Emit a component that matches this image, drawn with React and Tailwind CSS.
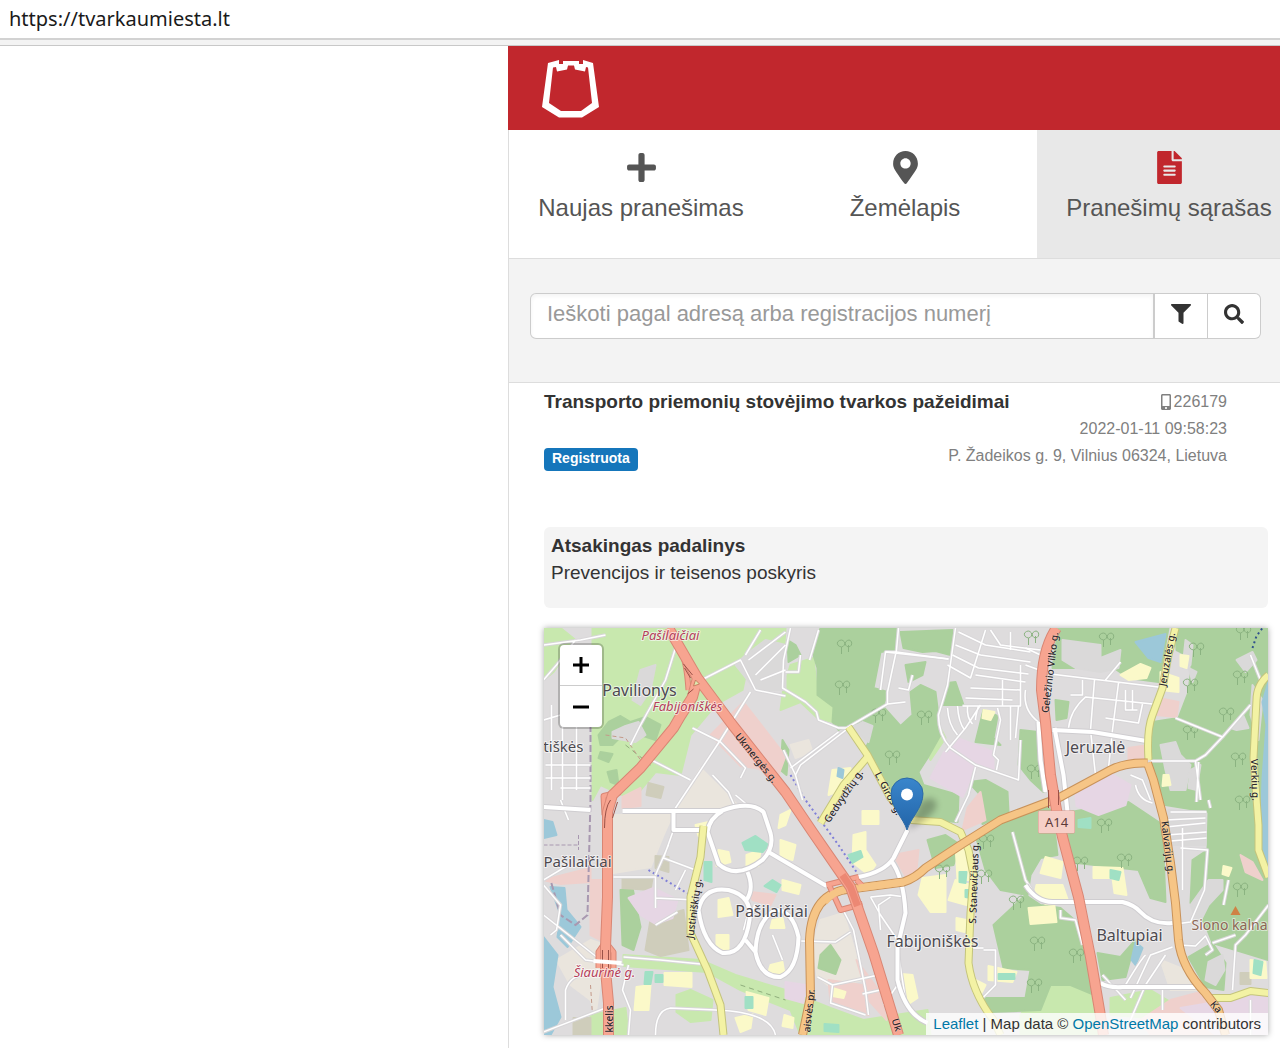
import { useState } from 'react';
import { FaPlus, FaMapMarkerAlt, FaFileAlt, FaFilter, FaSearch, FaMobileAlt } from 'react-icons/fa';

const TABS = [
  { id: 'new', label: 'Naujas pranešimas', Icon: FaPlus },
  { id: 'map', label: 'Žemėlapis', Icon: FaMapMarkerAlt },
  { id: 'list', label: 'Pranešimų sąrašas', Icon: FaFileAlt },
];

const GRASS = [
  '592,628 785,628 783,660 748,662 742,690 715,705 690,735 680,775 655,772 640,790 622,795 600,785 592,800',
  '783,688 790,665 813,658 817,695 833,707 832,722 817,718 800,702 780,710',
  '623,955 700,960 735,975 785,990 830,1008 863,1020 927,1010 930,1035 800,1035 790,1010 740,990 707,972 623,966',
  '590,1015 625,1008 628,1035 590,1035',
  '1040,985 1090,978 1102,1035 1020,1035 1020,1015',
  '543,628 560,628 575,640 553,672 543,680',
  '676,995 690,990 712,1000 710,1020 690,1022 676,1012',
  '1175,748 1202,744 1202,762 1178,760',
  '1245,840 1258,850 1266,880 1248,890',
  '1110,998 1150,990 1175,1005 1150,1018 1110,1015',
  '930,760 945,738 940,728 925,750',
];

const FOREST = [
  '820,628 898,628 896,650 880,652 873,688 887,692 883,705 847,725 838,730 832,722 833,707 817,695 817,668 813,655',
  '850,725 883,707 900,726 912,715 910,692 920,685 935,692 937,708 940,735 927,758 918,772 923,785 958,795 957,822 930,820 907,812 880,778 863,752 872,735 860,722',
  '900,632 952,630 950,655 935,651 922,652 903,648',
  '947,683 955,682 963,705 942,705',
  '983,710 997,716 993,738 1000,745 975,742',
  '968,782 985,780 1007,792 1008,812 982,824 980,795',
  '1175,628 1268,628 1268,960 1212,943 1205,925 1190,903 1192,860 1207,850 1208,812 1165,805 1150,758 1148,742 1152,722 1178,718 1188,692 1192,658 1176,650',
  '1058,628 1168,628 1158,682 1128,678 1102,660 1075,668 1052,668',
  '1020,730 1038,732 1043,792 1030,780 1018,765',
  '1070,812 1128,802 1158,822 1162,830 1165,902 1150,898 1138,870 1068,862 1058,830',
  '975,835 1000,822 1045,805 1052,812 1057,855 1040,858 1030,875 1027,895 1000,890 985,870',
  '993,925 1025,895 1040,905 1060,908 1080,925 1092,975 1094,995 1070,985 1050,985 1040,1010 990,1012 983,998 1025,998 1030,970 1003,968',
  '1097,953 1120,957 1135,940 1125,977 1102,980',
  '1188,957 1212,943 1225,963 1223,990 1205,987',
  '620,890 632,888 640,927 633,950 622,945',
  '608,722 620,716 630,722 645,717 660,725 655,740 640,735 625,732 612,745 600,745 598,735',
  '600,752 612,754 608,762 598,758',
  '607,772 616,770 618,785 610,782',
  '782,740 788,750 786,775 780,770',
  '927,840 945,835 960,845 953,865 935,868',
  '820,955 830,945 840,960 835,974 818,968',
  '1055,700 1068,702 1066,718 1056,720',
  '787,640 795,645 800,655 788,662',
  '905,665 925,662 922,675 908,682',
];

const RETAIL = [
  '710,735 743,702 785,756 778,775 755,768 740,766',
  '1128,748 1148,745 1146,762 1128,763',
  '1158,698 1178,702 1176,717 1156,715',
  '967,808 980,792 985,820 962,830',
  '622,797 640,788 640,806 622,808',
  '590,880 602,880 600,940 590,935',
  '828,980 862,985 868,1015 830,1003',
  '893,855 918,850 916,870 905,876',
  '543,880 590,868 590,882 560,884',
  '1170,1000 1200,992 1220,1035 1150,1035 1140,1020',
  '750,892 775,895 770,905 752,900',
  '1240,855 1252,862 1262,880 1245,872',
  '856,960 878,990 886,1020 868,1000',
];

const INDUSTRY = [
  '943,753 957,738 993,752 993,770 977,765 962,797 930,778',
  '1075,795 1108,772 1130,785 1125,805 1098,815 1076,806',
  '628,898 653,888 677,900 672,918 655,924 640,915',
  '1180,1008 1268,993 1268,1035 1215,1035',
  '785,982 805,985 803,1003 785,998',
];

const BEIGE = [
  '613,815 672,815 663,835 650,867 613,873',
  '700,768 737,805 720,810 672,812 690,785',
  '820,920 843,913 863,980 830,987 817,977 812,945',
  '590,940 605,945 595,1015 590,1000 570,985 556,960',
  '635,665 650,650 660,665 640,705 630,705',
  '1160,960 1185,970 1200,990 1170,990',
  '790,745 808,740 812,752 795,758',
];

const OLIVE = [
  '650,920 683,910 688,950 660,956 645,950',
  '622,878 652,878 650,890 622,888',
  '648,783 663,787 660,798 646,795',
  '655,856 668,857 668,872 655,868',
  '573,1018 590,1018 590,1035 573,1035',
  '1240,973 1250,973 1250,984 1240,984',
];

const WATER = [
  '543,820 552,822 556,835 543,838',
  '550,887 564,888 566,910 580,927 567,947 557,937 560,915',
  '543,937 557,955 552,987 560,1017 550,1035 543,1035',
  '1135,642 1150,638 1165,634 1160,662 1148,658',
  '1268,682 1262,702 1266,725 1262,778 1260,840 1268,870',
  '1135,942 1142,948 1135,965 1131,960',
  '838,768 843,770 842,778 837,776',
];

const SCHOOL = [
  '832,770 850,768 846,788 828,795', '862,811 878,811 878,824 862,824', '718,850 728,852 730,862 716,866',
  '746,855 760,850 758,866 746,868', '718,900 728,898 732,915 718,917', '716,935 728,935 728,950 716,948',
  '772,920 782,918 784,928 770,928', '770,965 782,962 784,974 768,972', '664,973 691,973 691,987 664,985',
  '636,987 650,985 648,1010 634,1010', '735,1018 752,1014 750,1028 740,1032', '746,992 768,998 765,1015 748,1010',
  '853,835 865,832 865,850 875,865 868,875 852,862', '782,880 800,885 798,894 782,890',
  '922,878 945,875 945,912 930,912 918,895', '955,845 966,845 968,880 957,880', '955,880 970,885 966,905 948,900',
  '956,918 966,920 964,932 956,930', '901,974 912,975 917,998 905,1006 900,990', '988,966 1016,972 1012,982 988,980',
  '1045,857 1062,862 1060,878 1040,873', '1036,885 1062,885 1068,902 1045,904 1034,895', '1028,908 1054,906 1056,922 1030,924',
  '1093,867 1122,868 1126,895 1114,893 1112,878 1093,878', '1120,675 1140,664 1150,668 1146,678 1128,680',
  '1160,672 1178,678 1178,692 1160,690', '1180,655 1188,656 1186,668 1180,666', '1163,775 1168,775 1170,785 1162,786',
  '1250,960 1265,962 1266,978 1250,978', '785,825 790,810 780,815 778,828', '780,840 795,845 792,860 780,856',
  '975,980 985,985 980,995 973,992', '784,1015 793,1018 792,1028 782,1026', '695,825 708,822 708,833 698,836',
  '832,988 845,992 843,998 832,996', '983,710 994,712 990,720 982,718', '1223,866 1231,868 1228,876 1222,874',
];

const PITCH = [
  '742,843 755,836 768,845 762,852 745,850', '772,880 780,885 776,892 764,886', '848,855 860,851 862,857 852,863',
  '959,872 966,872 965,883 959,882', '965,890 970,890 970,898 965,897', '745,997 752,997 752,1008 745,1008', '824,1024 838,1025 838,1032 824,1031',
  '1254,960 1262,962 1260,975 1253,973', '998,974 1014,974 1014,979 998,979', '1110,870 1120,872 1118,880 1110,878',
  '645,972 652,972 650,984 644,984', '655,975 662,975 662,982 655,982', '1078,820 1090,818 1090,828 1078,827', '704,862 711,862 711,882 704,880',
];

// clearings and yards inside the green areas
const YARDS = [
  '1062,640 1100,645 1100,658 1120,650 1118,668 1100,672 1075,668 1062,660',
  '1160,745 1175,742 1180,755 1190,765 1185,790 1170,790 1165,770',
  '1185,640 1192,645 1190,665 1182,668', '1188,668 1196,672 1192,682',
  '1236,660 1252,652 1256,660 1245,672', '1252,685 1262,700 1258,740 1250,715',
  '1208,880 1222,880 1222,890 1208,905 1198,925 1190,905', '1208,962 1222,955 1224,970 1215,985 1205,980',
  '735,665 745,655 765,640 785,645 785,690 755,690', '640,670 655,665 650,690 640,705 632,700',
  '612,732 625,726 638,722 645,735 635,742 612,738',
  '1168,810 1205,812 1205,845 1170,845', '868,742 872,726 862,722 852,728',
  '1230,728 1243,716 1248,728 1236,730', '1190,770 1200,765 1196,790 1188,788',
];

const THICK = [
  'M543 807L590 810M622 811L720 811Q750 800 763 812L770 833Q774 848 762 860Q736 880 718 864L707 832Q709 818 722 811',
  'M768 852L785 862L826 886', 'M747 872Q754 888 746 900', 'M698 910Q703 886 728 890Q752 896 749 920Q744 955 722 953Q703 945 698 910',
  'M745 940L755 952Q760 978 780 977Q797 970 798 937Q792 910 775 910Q756 920 755 952',
  'M858 877Q884 872 893 858L907 830M890 860Q903 876 905 913L897 947V980Q905 1014 927 1023',
  'M1083 902H1122Q1134 905 1140 912Q1152 925 1172 923', 'M1100 983Q1108 988 1122 987H1195',
  'M1025 885Q1036 902 1052 902H1075', 'M1052 730L1092 732L1146 741', 'M673 811V830H705', 'M1038 722L1040 760L1045 792', 'M1054 728L1063 775L1067 812',
];

const THIN = [
  'M543 645L580 640L605 635M543 680L556 665L575 640', 'M551 705V790M562 690V800M576 690V790M545 765H590M545 778H590M560 788H590M543 720L560 715L590 718M560 800L568 820',
  'M675 648L665 680L640 725L630 745', 'M693 684L740 660L755 690M745 655L760 630M755 675L785 645M760 680L785 670M748 660L785 632',
  'M755 690L785 696M750 692L720 740L673 811', 'M645 757L690 780M692 728L720 742L745 768L740 778', 'M712 775L728 792L735 808',
  'M790 628L783 660L782 688L805 702L816 712L818 720L838 728L846 728', 'M818 630L809 660M785 672H798L800 655',
  'M846 728L887 704V692L896 650L898 628M887 704L905 702M880 690L885 652L948 659',
  'M955 628L947 685L938 715Q938 735 950 748L975 765L1018 780L1020 740', 'M885 652H896L948 659M898 688L908 690L912 675',
  'M947 665L970 678L985 630M958 632L985 645M955 645L980 655M952 655L978 668M990 630L1000 645L1040 650M985 645L1030 652M980 655L1030 662M978 668L1028 674M975 675L1025 682M970 688L1020 690M965 698L1012 700M962 706H1020V665M1002 706V680M1010 632V650',
  'M947 708Q948 725 957 735M957 706Q958 722 964 730M967 706Q966 718 972 724M980 705L965 728L945 752M978 706Q975 716 975 720', 'M997 708L1000 720L993 755L998 760L996 770M1010 706V740M1018 706L1015 738',
  'M848 728L800 765L795 775M838 732L790 768', 'M783 750L795 775L802 800', 'M975 767L968 795L955 822',
  'M1025 648L1040 655M1025 665L1050 674L1158 687M1082 680V695H1070M1094 680L1090 730L1095 775M1118 683L1112 730L1108 768M1068 728Q1070 710 1085 697L1152 704M1125 690V710H1137M1132 690V710M1142 704L1138 723L1105 718M1105 680L1120 662M1025 690Q1022 710 1038 722',
  'M1150 761H1195L1205 755L1222 737L1175 718M1195 761L1200 800M1198 762L1196 802M1208 800L1210 808', 'M1130 775L1142 780L1150 800M1135 785Q1138 800 1152 803',
  'M1165 820L1205 818M1165 827L1205 823M1166 835L1206 832M1170 841L1206 838M1170 812L1206 812M1182 828V890M1180 848L1207 850L1204 890L1190 922L1175 924',
  'M1102 975L1125 1000M1145 955Q1140 960 1125 985M1172 947L1150 955L1130 998M1165 955L1145 985L1130 1020M1178 945L1195 946L1205 936L1212 950L1205 955M1268 905L1245 935L1235 945L1232 990M1212 943L1235 935M1250 1000V1035M1162 985V1010',
  'M1250 655L1260 680M1222 737L1250 705M1223 905L1228 880', 'M1060 910V918L1075 920L1082 945',
  'M590 810L543 808M543 880L568 865M543 885L560 905L556 930L550 935M560 935L585 960L623 965M543 915L600 960',
  'M623 957L660 960L700 964M655 1035Q655 1010 670 1008L715 1010Q770 1012 775 1035M628 965L622 990L630 1010L628 1035M543 1032L605 1008M565 1020V990Q570 975 585 975',
  'M673 830L663 858L695 870M613 877H655V908M655 898L695 900M655 925L677 912M685 870L675 890M668 845L655 875',
  'M870 897L890 895L905 897M870 897L880 915L897 940M890 897L878 905L880 930M840 905L853 930L865 990L868 1015M800 941L835 942L850 932M817 977L832 985L878 975M832 985L830 1003L865 1015M862 994L880 990',
  'M983 950H995V985L980 1000M970 948H983M1012 832L1025 880L1035 895', 'M897 948L905 1000M907 830L905 826', 'M747 805L735 795M772 935L782 960',
  'M749 907L743 930M754 905L748 930', 'M897 985L883 1005',
];

const TRUNK = [
  'M668 628L697 678L732 725L785 792L812 832L850 887L873 953L898 1035',
  'M697 678L692 697L680 716L673 728L640 768L612 795L607 812V897L605 947V970L608 1003V1035',
  'M1056 628Q1041 650 1041 690L1045 722L1050 775L1056 810L1062 837L1078 897L1090 957L1099 1010L1103 1035',
];
const TRUNK_LINKS = ['M680 650Q686 660 688 690', 'M826 885L858 877M829 886L840 910L862 904M856 880L862 886', 'M598 968V952L605 942L613 952V968', 'M604 815L603 796L620 792'];
const ORANGE = [
  'M802 1035L810 997L809 940Q811 892 850 889L903 882Q915 878 925 868L960 845L1000 820L1058 798L1110 770Q1125 762 1147 763',
  'M1147 763L1153 780L1163 818L1170 863L1175 903L1178 940Q1181 968 1205 993L1218 1010L1225 1035',
];
const YELLOW = [
  'M1175 628L1168 655L1162 688L1152 715Q1146 730 1148 760',
  'M1268 675Q1256 685 1256 700L1253 758L1258 825V850L1268 877',
  'M848 727L867 755L890 798L911 820L940 822L960 832L968 850L973 875L970 913L968 963Q972 993 993 1020L1000 1035',
  'M867 757L843 785L820 823',
  'M703 826L700 857L690 897V933L707 970L720 1005L723 1035',
  'M1208 998H1230L1250 991L1268 993',
];

const TREES = [
  [844, 647], [842, 688], [878, 716], [924, 718], [892, 758], [1031, 638], [1106, 640], [1196, 650], [1190, 686],
  [1226, 715], [1190, 733], [1240, 678], [1238, 760], [1242, 803], [1243, 633], [1104, 826], [1124, 861], [1080, 864],
  [1240, 890], [1037, 944], [1076, 956], [1034, 986], [1016, 903], [984, 877], [942, 872], [986, 842], [1034, 772],
];

const PLACES = [
  { text: 'Pavilionys', x: 639, y: 696 },
  { text: 'Jeruzalė', x: 1095, y: 753 },
  { text: 'Pašilaičiai', x: 771, y: 917 },
  { text: 'Fabijoniškės', x: 932, y: 947 },
  { text: 'Baltupiai', x: 1129, y: 941 },
];

const STREETS = [
  { text: 'Ukmergės g.', x: 753, y: 760, r: 51 },
  { text: 'Gedvydžių g.', x: 846, y: 798, r: -56 },
  { text: 'L. Giros g.', x: 885, y: 795, r: 62 },
  { text: 'Geležinio Vilko g.', x: 1053, y: 673, r: -83 },
  { text: 'Jeruzalės g.', x: 1170, y: 660, r: -80 },
  { text: 'Verkių g.', x: 1251, y: 780, r: 88 },
  { text: 'Kalvarijų g.', x: 1164, y: 848, r: 83 },
  { text: 'S. Stanevičiaus g.', x: 977, y: 883, r: -88 },
  { text: 'Justiniškių g.', x: 697, y: 909, r: -82 },
  { text: 'aisvės pr.', x: 812, y: 1011, r: -84 },
  { text: 'kkelis', x: 612, y: 1019, r: -90 },
  { text: 'Uk', x: 893, y: 1026, r: 72 },
  { text: 'Ka', x: 1213, y: 1009, r: 50 },
];

function Areas({ list, fill }) {
  return <g fill={fill} stroke={fill} strokeWidth="2" strokeLinejoin="round">{list.map((p) => <polygon key={p} points={p} />)}</g>;
}

function Roads({ list, color, casing, width }) {
  return (
    <g fill="none" strokeLinejoin="round">
      {list.map((d) => <path key={'c' + d} d={d} stroke={casing} strokeWidth={width + 2} />)}
      {list.map((d) => <path key={d} d={d} stroke={color} strokeWidth={width} />)}
    </g>
  );
}

function CityMap() {
  return (
    <svg viewBox="543 628 725 407" preserveAspectRatio="xMidYMid slice" className="block w-full h-[407px]" role="img" aria-label="Fabijoniškės">
      <rect x="543" y="628" width="725" height="407" fill="#dedcdd" />
      <Areas list={BEIGE} fill="#eae5dd" />
      <Areas list={GRASS} fill="#c8e8ae" />
      <Areas list={FOREST} fill="#abd09d" />
      <Areas list={YARDS} fill="#dad9d9" />
      <Areas list={OLIVE} fill="#cfcdbb" />
      <Areas list={RETAIL} fill="#efd0cc" />
      <Areas list={INDUSTRY} fill="#e6d6e4" />
      <Areas list={SCHOOL} fill="#fbf9c9" />
      <Areas list={WATER} fill="#9cc8d9" />
      <Areas list={PITCH} fill="#a0e0c4" />

      <g fill="none" stroke="#8bb381" strokeWidth="1">
        {TREES.map(([x, y]) => (
          <path key={x + '-' + y} d={`M${x - 3} ${y + 7}v-7m0 0q-5-1-4-5q4-4 7 0q1 4-3 5M${x + 4} ${y + 5}v-7m0 2q-4-1-3-5q4-4 6 0q1 4-3 5`} />
        ))}
      </g>

      <g fill="none" strokeWidth="1" stroke="#a898b0">
        <path d="M590 725V800L587 915L575 925L560 915L550 880" strokeWidth="2" strokeDasharray="7 3" />
        <path d="M543 845H578M578 835V850" strokeDasharray="4 2" />
        <path d="M648 870L688 894M790 775L805 800L838 845L856 872" stroke="#7f7fd8" strokeWidth="2" strokeDasharray="2 3" />
        <path d="M740 985L785 1000M625 745L650 765" stroke="#8fae7c" strokeDasharray="5 4" />
        <path d="M590 985L592 1015M605 735L625 738L640 760" stroke="#c49a8a" strokeDasharray="4 3" />
        <path d="M1252 648L1256 636L1262 628" stroke="#31508c" strokeWidth="2" strokeDasharray="2 3" />
      </g>

      <Roads list={THIN} color="#ffffff" casing="#d8d6d8" width={1.5} />
      <Roads list={THICK} color="#ffffff" casing="#cfcdd0" width={4} />
      <Roads list={YELLOW} color="#f3f2a4" casing="#c4c47c" width={6} />
      <Roads list={ORANGE} color="#f6c586" casing="#c8925a" width={7} />
      <Roads list={TRUNK_LINKS} color="#f7a490" casing="#d98674" width={4} />
      <Roads list={TRUNK} color="#f7a490" casing="#d98674" width={9} />
      <path d="M858 888L903 882M824 902Q832 892 843 890" fill="none" stroke="#f6c586" strokeWidth="7" />
      <path d="M842 875L850 887L857 906" fill="none" stroke="#ec8874" strokeWidth="7" />
      <path
        d="M683 664L692 675M684 668L690 678M687 694L693 689M604 828Q604 808 610 800M612 818L617 802M1048 790V808M1058 790V805M602 950V968M608 950V968"
        fill="none"
        stroke="#9b5248"
        strokeWidth="1"
      />
      <path d="M593 961L621 963" stroke="#ffffff" strokeWidth="4" />
      <path d="M693 686l2 -6l4 4z" fill="#dbe8b0" stroke="#c97f62" strokeWidth="1" />
      <path d="M1235 906L1240 915H1230Z" fill="#cf8245" />

      <g fontFamily="'Noto Sans', sans-serif" textAnchor="middle" paintOrder="stroke" strokeLinejoin="round">
        <g fill="#2c282c" fontSize="10" fontWeight="500" stroke="#ffffff" strokeOpacity="0.3" strokeWidth="1">
          {STREETS.map((s) => (
            <text key={s.text} x={s.x} y={s.y} transform={`rotate(${s.r} ${s.x} ${s.y})`}>{s.text}</text>
          ))}
        </g>
        <g fill="#4d4a50" fontSize="16" stroke="#ffffff" strokeOpacity="0.6" strokeWidth="2">
          {PLACES.map((p) => <text key={p.text} x={p.x} y={p.y}>{p.text}</text>)}
          <text x="543" y="867" fontSize="15" textAnchor="start">Pašilaičiai</text>
          <text x="583" y="752" fontSize="15" textAnchor="end">tiškės</text>
        </g>
        <g fill="#b5405a" fontSize="13" fontStyle="italic" stroke="#ffffff" strokeOpacity="0.6" strokeWidth="2">
          <text x="670" y="640">Pašilaičiai</text>
          <text x="687" y="711">Fabijoniškės</text>
          <text x="604" y="977">Šiaurinė g.</text>
        </g>
        <text x="1267" y="930" fontSize="14" textAnchor="end" fill="#8c6654" stroke="#ffffff" strokeOpacity="0.5" strokeWidth="2">Siono kalna</text>
        <rect x="1038" y="811" width="36" height="22" rx="1" fill="#f6cfc7" stroke="#d9958a" />
        <text x="1056" y="827" fontSize="13" fill="#5c3a38">A14</text>
      </g>

      <defs>
        <linearGradient id="pin" x1="0" y1="0" x2="0" y2="1">
          <stop offset="0" stopColor="#3a86cc" />
          <stop offset="1" stopColor="#2264a8" />
        </linearGradient>
        <filter id="soft" x="-50%" y="-50%" width="200%" height="200%">
          <feGaussianBlur stdDeviation="3" />
        </filter>
      </defs>
      <path d="M907 830L920 802Q932 794 936 803Q938 814 907 830Z" fill="#000000" opacity="0.25" filter="url(#soft)" />
      <path
        d="M906.500 830C903 818 890.500 808 890.500 793.500A16 15.500 0 0 1 922.500 793.500C922.500 808 910 818 906.500 830Z"
        fill="url(#pin)"
        stroke="#2c6aa6"
      />
      <circle cx="906.500" cy="794.500" r="6" fill="#ffffff" />
    </svg>
  );
}

function Logo() {
  return (
    <svg viewBox="0 0 57 59" className="w-[57px] h-[59px]" fill="#ffffff" role="img" aria-label="Tvarkau miestą">
      <path
        fillRule="evenodd"
        d="M6 4L17 1V5H21V2H37V5H41V1L51 4L57 48L40 58.500H17L0 48ZM11 8.500L7 44L19 52H39L50 44L46 8.500L44 8L43 12.500L33 10.500L32 6.500H26L25 10.500L15 12.500L14 8Z"
      />
    </svg>
  );
}

export default function App() {
  const [tab, setTab] = useState('list');
  const [query, setQuery] = useState('');

  return (
    <div className="min-h-screen flex flex-col bg-white overflow-hidden font-['Liberation_Sans',Arial,sans-serif] text-[#333333]">
      <div className="h-10 px-[9px] flex items-center border-b-2 border-[#d2d2d2] font-['Noto_Sans',sans-serif] text-xl leading-6 text-[#1a1a1a]">
        https://tvarkaumiesta.lt
      </div>
      <div className="h-1.5 bg-[#f3f3f3] border-b border-[#c8c8c8]" />

      <div className="flex-1 grid grid-cols-[508px_minmax(0,1fr)]">
        <div />
        <div className="border-l border-[#dddddd]">
          <header className="h-[84px] -ml-px pl-[34px] flex items-center bg-[#c1272d]">
            <Logo />
          </header>

          <nav className="flex overflow-hidden border-b border-[#dddddd]">
            {TABS.map(({ id, label, Icon }) => (
              <button
                key={id}
                onClick={() => setTab(id)}
                className={`w-[264px] h-32 pt-[21px] shrink-0 flex flex-col items-center gap-2 text-2xl leading-8 text-[#555555] ${tab === id ? 'bg-[#e8e8e8]' : 'bg-white'}`}
              >
                <Icon size={33} className={tab === id ? 'text-[#c1272d]' : 'text-[#555555]'} />
                {label}
              </button>
            ))}
          </nav>

          <form onSubmit={(e) => e.preventDefault()} className="flex bg-[#f3f3f3] border-b border-[#dddddd] pt-[34px] pb-[43px] pl-[21px] pr-[19px]">
            <input
              type="text"
              aria-label="Paieška"
              value={query}
              onChange={(e) => setQuery(e.target.value)}
              placeholder="Ieškoti pagal adresą arba registracijos numerį"
              className="min-w-0 flex-1 h-[46px] px-4 pb-1 rounded-l-md border border-r-2 border-[#cccccc] bg-white text-[22px] placeholder-[#999999] shadow-inner outline-none"
            />
            <button type="button" aria-label="Filtruoti" className="w-[53px] h-[46px] pb-1 flex items-center justify-center bg-white border-y border-r border-[#cccccc]">
              <FaFilter size={20} />
            </button>
            <button type="submit" aria-label="Ieškoti" className="w-[53px] h-[46px] pb-1 flex items-center justify-center bg-white border-y border-r border-[#cccccc] rounded-r-md">
              <FaSearch size={20} />
            </button>
          </form>

          <article className="pt-[5px] pl-[35px] pr-3">
            <div className="pr-[41px] pb-14 leading-[27px] text-[#808080]">
              <div className="flex justify-between">
                <h1 className="text-[19px] font-bold text-[#333333]">Transporto priemonių stovėjimo tvarkos pažeidimai</h1>
                <p className="flex items-center">
                  <FaMobileAlt size={16} />
                  226179
                </p>
              </div>
              <p className="text-right">2022-01-11 09:58:23</p>
              <div className="flex justify-between">
                <span className="mt-1.5 h-[23px] px-2 rounded-sm bg-[#1576bb] text-sm leading-5 font-bold text-white">Registruota</span>
                <p className="h-[27px]">P. Žadeikos g. 9, Vilnius 06324, Lietuva</p>
              </div>
            </div>

            <section className="h-[81px] px-[7px] py-[5px] rounded-md bg-[#f4f4f4] text-[19px] leading-[27px]">
              <h2 className="font-bold">Atsakingas padalinys</h2>
              <p>Prevencijos ir teisenos poskyris</p>
            </section>

            <div className="relative mt-5 mb-3 shadow-[0_0_6px_rgba(0,0,0,0.35)]">
              <CityMap />
              <div className="absolute left-3.5 top-[15px] w-[46px] rounded-md border-2 border-black/20 bg-clip-padding bg-white text-black">
                <button aria-label="Priartinti" className="w-full h-[41px] flex items-center justify-center border-b border-[#cccccc]">
                  <svg width="16" height="16" viewBox="0 0 16 16"><path d="M8 0V16M0 8H16" stroke="currentColor" strokeWidth="3" /></svg>
                </button>
                <button aria-label="Atitolinti" className="w-full h-[41px] flex items-center justify-center">
                  <svg width="16" height="16" viewBox="0 0 16 16"><path d="M0 8H16" stroke="currentColor" strokeWidth="3" /></svg>
                </button>
              </div>
              <p className="absolute right-0 bottom-0 px-[7px] bg-white/80 text-[15px] leading-[22px]">
                <a href="#leaflet" className="text-[#0078a8]">Leaflet</a> | Map data © <a href="#osm" className="text-[#0078a8]">OpenStreetMap</a> contributors
              </p>
            </div>
          </article>
        </div>
      </div>
    </div>
  );
}
